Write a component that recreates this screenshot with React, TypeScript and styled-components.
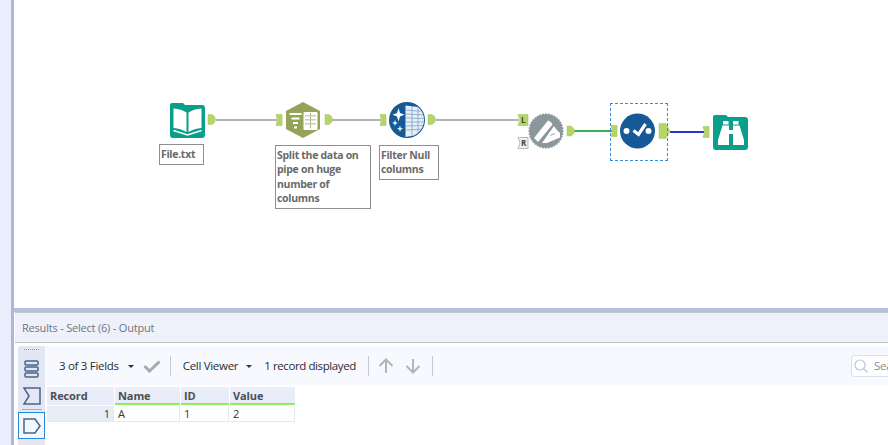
import React from 'react';
import styled, { createGlobalStyle } from 'styled-components';

const GlobalStyle = createGlobalStyle`
  html, body { margin: 0; padding: 0; overflow: hidden; }
  body { font-family: "Open Sans", "Noto Sans", sans-serif; background: #fff; }
`;

const Shell = styled.div`
  display: flex;
  width: 888px;
  height: 445px;
  overflow: hidden;
`;

const Rail = styled.div`
  width: 11px;
  flex: none;
  background: #e9eefa;
`;

const Sash = styled.div`
  width: 3px;
  flex: none;
  background: #a9b8dc;
`;

const Main = styled.div`
  flex: 1;
  min-width: 0;
  display: flex;
  flex-direction: column;
`;

const Canvas = styled.div`
  position: relative;
  height: 308px;
  flex: none;
  background: #fff;
`;

const HSash = styled.div`
  height: 4px;
  flex: none;
  background: #b3c0df;
`;

const Wires = styled.svg`
  position: absolute;
  left: 0;
  top: 0;
`;

const Tool = styled.svg<{ $x: number; $y: number }>`
  position: absolute;
  left: ${p => p.$x - 14}px;
  top: ${p => p.$y}px;
  overflow: visible;
`;

const Note = styled.div<{ $x: number; $y: number; $w: number; $h: number }>`
  position: absolute;
  left: ${p => p.$x - 14}px;
  top: ${p => p.$y}px;
  width: ${p => p.$w}px;
  height: ${p => p.$h}px;
  box-sizing: border-box;
  border: 1px solid #8f8f8f;
  padding: 2px 1px;
  font-size: 10.5px;
  letter-spacing: -0.3px;
  line-height: 14.3px;
  font-weight: 700;
  color: #6a6a6a;
  background: #fff;
`;

const Selection = styled.div`
  position: absolute;
  left: ${610 - 14}px;
  top: 103px;
  width: 58px;
  height: 58px;
  box-sizing: border-box;
  border: 1px dashed #3b8ed8;
`;

const Results = styled.div`
  flex: 1;
  min-height: 0;
  margin-left: 1px;
  display: flex;
  flex-direction: column;
  background: #fff;
`;

const TitleBar = styled.div`
  height: 29px;
  flex: none;
  display: flex;
  align-items: center;
  padding-left: 7px;
  background: #eef1f9;
  border-top: 1px solid #c9c9c9;
  border-bottom: 1px solid #c4c4c4;
  font-size: 11px;
  letter-spacing: -0.2px;
  color: #6f7680;
`;

const ResultsBody = styled.div`
  flex: 1;
  min-height: 0;
  display: flex;
  padding: 3px 0 0 3px;
  background: #fff;
`;

const TabStrip = styled.div`
  width: 27px;
  flex: none;
  display: flex;
  flex-direction: column;
  align-items: center;
  background: #e2e7f3;
  border-radius: 3px 0 0 0;
`;

const Grip = styled.div`
  width: 15px;
  height: 0;
  margin: 3px 0 5px;
  border-top: 1px dotted #8d95a5;
`;

const TabButton = styled.button<{ $active?: boolean }>`
  width: 27px;
  height: 27px;
  padding: 0;
  display: flex;
  align-items: center;
  justify-content: center;
  box-sizing: border-box;
  background: ${p => (p.$active ? '#f2f6fd' : 'transparent')};
  border: ${p => (p.$active ? '1px solid #2a8ad8' : '1px solid transparent')};
`;

const TabRule = styled.div`
  width: 20px;
  height: 1px;
  margin: 0 0 2px;
  background: #a9afbd;
`;

const Content = styled.div`
  flex: 1;
  min-width: 0;
  display: flex;
  flex-direction: column;
`;

const Toolbar = styled.div`
  height: 39px;
  flex: none;
  display: flex;
  align-items: center;
  padding-left: 14px;
  background: #f7f9fe;
  font-size: 11.5px;
  letter-spacing: -0.3px;
  color: #2c2c2c;
  white-space: nowrap;
  svg { flex: none; }
`;

const Caret = styled.span<{ $gap: number }>`
  width: 0;
  height: 0;
  flex: none;
  margin: 1px 0 0 ${p => p.$gap}px;
  border-left: 3px solid transparent;
  border-right: 3px solid transparent;
  border-top: 3px solid #333;
`;

const Divider = styled.span<{ $left: number; $right: number }>`
  width: 1px;
  height: 20px;
  flex: none;
  margin: 0 ${p => p.$right}px 0 ${p => p.$left}px;
  background: #c6c8cc;
`;

const ToolbarLabel = styled.span<{ $left: number }>`
  margin-left: ${p => p.$left}px;
  letter-spacing: -0.4px;
`;

const CheckIcon = styled.svg`
  margin-left: 9px;
`;

const DownIcon = styled.svg`
  margin-left: 11px;
`;

const Search = styled.div`
  display: flex;
  align-items: center;
  gap: 6px;
  margin-left: 418px;
  width: 60px;
  height: 22px;
  flex: none;
  box-sizing: border-box;
  padding-left: 2px;
  border: 1px solid #d9e0ee;
  border-radius: 3px;
  background: #fff;
  color: #8c8c8c;
`;

const Table = styled.div`
  display: grid;
  grid-template-columns: 67px 65px 48px 65px;
  gap: 1px;
  width: 249px;
  margin: 2px 0 0 2px;
  font-size: 11px;
  letter-spacing: -0.1px;
`;

const HeadCell = styled.div<{ $marked?: boolean }>`
  height: 18px;
  box-sizing: border-box;
  padding: 0 3px;
  line-height: 17px;
  font-weight: 700;
  color: #4b4f57;
  background: #e8edf8;
  border-bottom: 2px solid ${p => (p.$marked ? '#8fee5f' : '#e8edf8')};
`;

const Cell = styled.div<{ $index?: boolean }>`
  height: 16px;
  box-sizing: border-box;
  padding: 0 3px;
  line-height: 15px;
  color: #333;
  text-align: ${p => (p.$index ? 'right' : 'left')};
  background: ${p => (p.$index ? '#e8edf8' : '#fff')};
  border-bottom: 1px solid #e4e8f3;
  border-right: 1px solid #e4e8f3;
`;

const InAnchor = ({ x, y, letter }: { x: number; y: number; letter?: string }) => (
  <g>
    <path
      d={`M${x} ${y - 5.5}h${letter ? 10 : 6}v11h-${letter ? 10 : 6}l${letter ? 2 : 1.5} -5.5z`}
      fill={letter === 'R' ? '#f1f3ea' : '#b5d56a'}
      stroke={letter === 'R' ? '#8f9488' : '#a5c65c'}
      strokeWidth="0.6"
    />
    {letter && (
      <text x={x + 3} y={y + 3} fontSize="8" fontWeight="700" fill="#3d4a3a" fontFamily="Open Sans, sans-serif">
        {letter}
      </text>
    )}
  </g>
);

const OutAnchor = ({ x, y, big }: { x: number; y: number; big?: boolean }) => (
  <path
    d={
      big
        ? `M${x} ${y - 7.5}h7l4 7.500l-4 7.500h-7z`
        : `M${x} ${y - 5}h4q3.500 2 3.500 5t-3.500 5h-4z`
    }
    fill="#b5d56a"
    stroke="#a5c65c"
    strokeWidth="0.5"
  />
);

const BookIcon = () => (
  <Tool $x={170} $y={103} width="35" height="35" viewBox="0 0 35 35">
    <path d="M2 0h11l2 2h17q3 0 3 3v27q0 3-3 3H3q-3 0-3-3V2q0-2 2-2z" fill="#0a9f8a" />
    <path d="M16.500 9.500C13 7 9 6 3.500 5.500v19.500c5 .5 9 1.500 13 4z" fill="#fff" />
    <path d="M18.500 9.500C22 7 26 6 31.500 5.500v19.500c-5 .5-9 1.500-13 4z" fill="#fff" />
    <path d="M3.500 27.500l14 4.500 14-4.500" fill="none" stroke="#fff" strokeWidth="1.500" />
  </Tool>
);

const HexIcon = () => (
  <Tool $x={285} $y={102} width="36" height="36" viewBox="0 0 36 36">
    <path d="M18 0l17 9v18l-17 9-17-9V9z" fill="#93a35a" />
    <path d="M4.500 11h12v2h-12zM6.500 15.500h8v2h-8zM8 20h5v2H8zM9 24.500h3v2H9z" fill="#fff" />
    <rect x="18.500" y="10" width="14" height="18" rx="1" fill="#fff" />
    <path d="M20 13.500h11v.8H20zM20 17.500h11v.8H20zM20 21.500h11v.8H20zM25.200 11v15.500h.8V11z" fill="#93a35a" />
  </Tool>
);

const FilterGridIcon = () => (
  <Tool $x={389} $y={102} width="36" height="36" viewBox="0 0 36 36">
    <defs>
      <clipPath id="filter-disc">
        <circle cx="18" cy="18" r="17" />
      </clipPath>
    </defs>
    <circle cx="18" cy="18" r="18" fill="#155a96" />
    <g clipPath="url(#filter-disc)">
      <path d="M16.500 3.500L36 6v26l-19.500 3z" fill="#e8eff6" />
      <path d="M16.500 8l19 1.500M16.500 12l19 1M16.500 16l19 .5M16.500 20l19 0M16.500 24l19-.5M16.500 28l19-1M23 4v30M29 5v28" stroke="#7da3c6" strokeWidth="0.800" fill="none" />
    </g>
    <path d="M9.500 6l1.500 5 4.500 1.700-4.500 1.700-1.500 5-1.500-5-4.500-1.700 4.500-1.700zM6 18l.8 2.200 2.200.8-2.200.8L6 24l-.8-2.200-2.200-.8 2.200-.8zM11 23.500l.8 2.400 2.400.8-2.400.8-.8 2.400-.8-2.400-2.400-.8 2.400-.8z" fill="#fff" />
  </Tool>
);

const gearPath = (() => {
  const pts: string[] = [];
  const n = 36;
  for (let i = 0; i < n * 2; i++) {
    const r = i % 2 ? 16.5 : 18;
    const a = (i * Math.PI) / n;
    pts.push(`${(18 + r * Math.cos(a)).toFixed(1)} ${(18 + r * Math.sin(a)).toFixed(1)}`);
  }
  return `M${pts.join('L')}z`;
})();

const JoinIcon = () => (
  <Tool $x={528} $y={113} width="36" height="36" viewBox="0 0 36 36">
    <path d={gearPath} fill="#8a979b" />
    <path d="M6 25L20 7.500l3 1.500 1.500 2.500L10 29z" fill="#fff" />
    <path d="M14 30L26 13l1.500 2.500 4.500 4.500v4.500l-13 5.500z" fill="#fff" />
    <path d="M22 22.500l5-2" stroke="#8a979b" strokeWidth="0.800" fill="none" />
  </Tool>
);

const SelectIcon = () => (
  <Tool $x={620} $y={113} width="35" height="36" viewBox="0 0 35 36">
    <circle cx="17.500" cy="18" r="17.500" fill="#155a96" />
    <circle cx="6.500" cy="18" r="3" fill="#fff" />
    <circle cx="28.500" cy="18" r="3" fill="#fff" />
    <path d="M13.500 17.500l5 4 7-10.500" fill="none" stroke="#fff" strokeWidth="3.200" />
  </Tool>
);

const BrowseIcon = () => (
  <Tool $x={713} $y={115} width="35" height="35" viewBox="0 0 35 35">
    <path d="M2 0h11l2 2h17q3 0 3 3v27q0 3-3 3H3q-3 0-3-3V2q0-2 2-2z" fill="#0a9f8a" />
    <path d="M10 6h5.500v3.500H10zM20 6h5.500v3.500H20z" fill="#fff" />
    <path d="M9.500 10.500H16v4.500h4v-4.500h6.500L31 25v5H20V19h-4v11H5v-5z" fill="#fff" />
  </Tool>
);

const Workflow = () => (
  <Wires width="874" height="308" viewBox="14 0 874 308">
    <path d="M216 120H277M331 120H381M436 120H519" stroke="#9a9a9a" strokeWidth="1.500" fill="none" />
    <path d="M574 131H612" stroke="#3cab5a" strokeWidth="2" fill="none" />
    <path d="M670 132H704" stroke="#2a33d6" strokeWidth="2" fill="none" />
    <OutAnchor x={208} y={119.500} />
    <InAnchor x={276} y={120} />
    <OutAnchor x={325} y={119.500} />
    <InAnchor x={380} y={120} />
    <OutAnchor x={428} y={119.500} />
    <InAnchor x={518} y={120} letter="L" />
    <InAnchor x={518} y={143} letter="R" />
    <OutAnchor x={567} y={131} />
    <InAnchor x={611} y={131} />
    <OutAnchor x={659} y={131} big />
    <InAnchor x={703} y={132} />
  </Wires>
);

const App: React.FC = () => {
  return (
    <Shell>
      <GlobalStyle />
      <Rail />
      <Sash />
      <Main>
        <Canvas>
          <Workflow />
          <BookIcon />
          <HexIcon />
          <FilterGridIcon />
          <JoinIcon />
          <Selection />
          <SelectIcon />
          <BrowseIcon />
          <Note $x={159} $y={144} $w={45} $h={21}>File.txt</Note>
          <Note $x={275} $y={145} $w={96} $h={64}>Split the data on pipe on huge number of columns</Note>
          <Note $x={379} $y={145} $w={60} $h={35}>Filter Null columns</Note>
        </Canvas>
        <HSash />
        <Results>
          <TitleBar>Results - Select (6) - Output</TitleBar>
          <ResultsBody>
            <TabStrip>
              <Grip />
              <TabButton aria-label="Configuration">
                <svg width="18" height="18" viewBox="0 0 18 18" fill="none" stroke="#4a6488" strokeWidth="1.500">
                  <rect x="2" y="1" width="13" height="4" rx="1" />
                  <rect x="2" y="7" width="13" height="4" rx="1" />
                  <rect x="2" y="13" width="13" height="4" rx="1" />
                </svg>
              </TabButton>
              <TabButton aria-label="Annotation">
                <svg width="20" height="20" viewBox="0 0 20 20" fill="none" stroke="#4a6488" strokeWidth="1.500">
                  <path d="M2 2h16v16H2l5-8z" />
                </svg>
              </TabButton>
              <TabRule />
              <TabButton $active aria-label="Output">
                <svg width="20" height="20" viewBox="0 0 20 20" fill="none" stroke="#4a6488" strokeWidth="1.500">
                  <path d="M2 3h11l5 7-5 7H2z" />
                </svg>
              </TabButton>
            </TabStrip>
            <Content>
              <Toolbar>
                3 of 3 Fields
                <Caret $gap={9} />
                <CheckIcon width="18" height="14" viewBox="0 0 18 14">
                  <path d="M1.500 7l5 5L16.500 2.500" fill="none" stroke="#a9a9a9" strokeWidth="3" />
                </CheckIcon>
                <Divider $left={9} $right={12} />
                Cell Viewer
                <Caret $gap={8} />
                <ToolbarLabel $left={12}>1 record displayed</ToolbarLabel>
                <Divider $left={12} $right={9} />
                <svg width="16" height="16" viewBox="0 0 16 16" fill="none" stroke="#b5b5b5" strokeWidth="2">
                  <path d="M8 15V2M1.500 8L8 1.500 14.500 8" />
                </svg>
                <DownIcon width="16" height="16" viewBox="0 0 16 16" fill="none" stroke="#b5b5b5" strokeWidth="2">
                  <path d="M8 1v13M1.500 8L8 14.500 14.500 8" />
                </DownIcon>
                <Divider $left={11} $right={0} />
                <Search>
                  <svg width="14" height="14" viewBox="0 0 14 14" fill="none" stroke="#b9c7dd" strokeWidth="1.200">
                    <circle cx="6" cy="6" r="5" />
                    <path d="M9.500 9.500l4 4" />
                  </svg>
                  Search
                </Search>
              </Toolbar>
              <Table>
                <HeadCell>Record</HeadCell>
                <HeadCell $marked>Name</HeadCell>
                <HeadCell $marked>ID</HeadCell>
                <HeadCell $marked>Value</HeadCell>
                <Cell $index>1</Cell>
                <Cell>A</Cell>
                <Cell>1</Cell>
                <Cell>2</Cell>
              </Table>
            </Content>
          </ResultsBody>
        </Results>
      </Main>
    </Shell>
  );
};

export default App;
